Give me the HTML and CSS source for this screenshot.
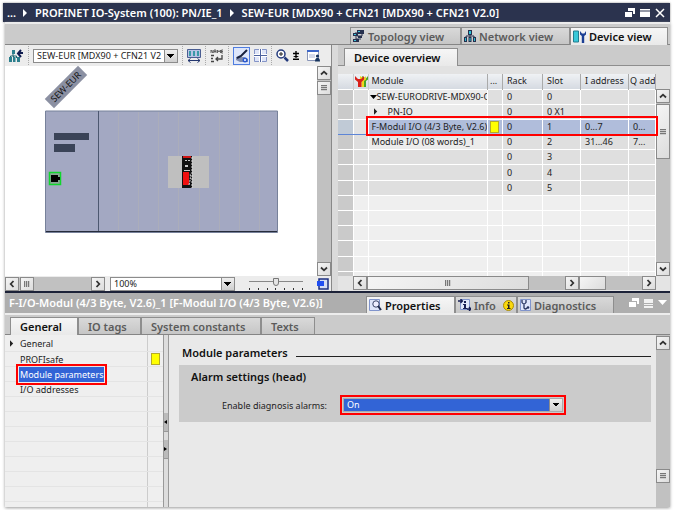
FILE: index.html
```html
<!DOCTYPE html>
<html lang="en">
<head>
<meta charset="utf-8">
<title>Device view</title>
<link rel="stylesheet" href="styles.css">
</head>
<body>
<svg class="defs" aria-hidden="true">
  <symbol id="up" viewBox="0 0 8 8"><path d="M1 5.5 4 2.7 7 5.5" fill="none" stroke="#333" stroke-width="1.8"/></symbol>
  <symbol id="down" viewBox="0 0 8 8"><path d="M1 2.5 4 5.3 7 2.5" fill="none" stroke="#333" stroke-width="1.8"/></symbol>
  <symbol id="left" viewBox="0 0 8 8"><path d="M5.5 1 2.7 4 5.5 7" fill="none" stroke="#333" stroke-width="1.8"/></symbol>
  <symbol id="right" viewBox="0 0 8 8"><path d="M2.5 1 5.3 4 2.5 7" fill="none" stroke="#333" stroke-width="1.8"/></symbol>
  <symbol id="tri" viewBox="0 0 5 8"><path d="M0 0 4 4 0 8z" fill="currentColor"/></symbol>
</svg>
<div class="window">
  <header class="titlebar">
    <nav class="crumbs" aria-label="Path">
      <span>...</span>
      <svg class="tri"><use href="#tri"/></svg>
      <span>PROFINET IO-System (100): PN/IE_1</span>
      <svg class="tri"><use href="#tri"/></svg>
      <span>SEW-EUR [MDX90 + CFN21 [MDX90 + CFN21 V2.0]</span>
    </nav>
    <button class="plain" aria-label="Float"><svg width="10" height="10" viewBox="0 0 10 10"><path d="M3 0h7v6H8V3H3z" fill="#fff"/><path d="M0 4h7v5H0z" fill="#fff"/></svg></button>
    <button class="plain" aria-label="Maximize"><svg width="10" height="10" viewBox="0 0 10 10"><path d="M0 1h10v1.500H0zM0 3.500h10V9H0z" fill="#fff"/></svg></button>
    <button class="plain" aria-label="Close"><svg width="10" height="10" viewBox="0 0 10 10"><path d="M1 1l8 8M9 1l-8 8" stroke="#fff" stroke-width="1.500"/></svg></button>
  </header>

  <div class="body">
    <div class="viewbar">
      <button class="tab view"><svg width="12" height="12" viewBox="0 0 12 12"><path d="M3 2v7h5M9 3v3H4" fill="none" stroke="#2c3550"/><path d="M4 0h7v4H4zM0 3h5v3H0zM5 6h4v2H5zM0 9h6v3H0z" fill="#26304e"/><path d="M5 1h2v1H5zM1 4h2v1H1zM1 10h2v1H1z" fill="#3cc4d8"/></svg>Topology view</button>
      <button class="tab view network"><svg width="12" height="12" viewBox="0 0 12 12"><path d="M6 3v5M2 8V6h8v2" fill="none" stroke="#26304e"/><path d="M4 0h4v5H4zM0 7h3v5H0zM4.500 7h3v5h-3zM9 7h3v5H9z" fill="#26304e"/><path d="M5 1h2v3H5zM1 8h1v3H1zM5.500 8h1v3h-1zM10 8h1v3h-1z" fill="#2bc0d4"/></svg>Network view</button>
      <button class="tab view active"><svg width="13" height="13" viewBox="0 0 13 13"><path d="M.5 1h5v11h-5z" fill="#38c8d8" stroke="#237c90"/><path d="M7 1v3.500L8.800 6v7h2.400V6L13 4.500V1l-1.700 2.500H9z" fill="#1c3f94"/></svg>Device view</button>
    </div>

    <div class="upper">
      <section class="graphic">
        <div class="toolbar">
          <button class="plain" aria-label="Go to network"><svg width="15" height="14" viewBox="0 0 15 14"><path d="M4 3v4M1.500 9V7h6v2M4.500 7v3" fill="none" stroke="#1f6672"/><path d="M3 1h3v4H3zM0 8h3v5H0zM4 8h2.500v5H4zM8 8h3v5H8z" fill="#2b7f8d"/><path d="M14 4H9m3-3L9 4.500 12 8" fill="none" stroke="#101c50" stroke-width="2"/></svg></button>
          <i class="sep"></i>
          <select class="combo device" aria-label="Device"><option>SEW-EUR [MDX90 + CFN21 V2</option></select>
          <i class="sep"></i>
          <button class="plain" aria-label="Show addresses"><svg width="14" height="14" viewBox="0 0 14 14"><path d="M.5.500h13v8H.5z" fill="#b8c4e4" stroke="#4a5d91"/><path d="M2 2h2v5H2zM6 2h2v5H6zM10 2h2v5h-2z" fill="#3a9aa8"/><path d="M1 11.500h12M3.500 9.500l-2.500 2 2.500 2M10.500 9.500l2.500 2-2.500 2" fill="none" stroke="#24366f"/></svg></button>
          <i class="sep"></i>
          <button class="plain" aria-label="Show names"><svg width="14" height="14" viewBox="0 0 14 14"><path d="M1 4V1l2 3V1M4 4V1h2v3M4 2.500h2M7.500 4V1L9 3l1.500-2v3M13 1h-1.500v3H13M11.500 2.500H13" fill="none" stroke="#555" stroke-width=".9"/><path d="M1 6.500h3M1 9.500h2M1 12.500h3M12 6v4H6m2-2L6 10l2 2" fill="none" stroke="#444" stroke-width="1.300"/></svg></button>
          <i class="sep"></i>
          <button class="plain pressed" aria-label="Show labels"><svg width="14" height="14" viewBox="0 0 14 14"><path d="M1 8h8l4 2v3H5L1 11z" fill="#7f8cae"/><path d="M2 9 6 7 12 1" fill="none" stroke="#17203f" stroke-width="2"/><circle cx="10" cy="11" r="2.500" fill="#2b59d0"/><circle cx="10" cy="11" r="1" fill="#fff"/></svg></button>
          <button class="plain" aria-label="Grid"><svg width="13" height="13" viewBox="0 0 13 13"><path d="M.5.500h12v12H.5z" fill="#dfe5f8" stroke="#8595c8"/><path d="M6.500 0v13M0 6.500h13" stroke="#fff" stroke-width="3"/><path d="M6.500 0v13M0 6.500h13" stroke="#4d629f"/></svg></button>
          <i class="sep"></i>
          <button class="plain" aria-label="Zoom"><svg width="13" height="13" viewBox="0 0 13 13"><circle cx="5" cy="5" r="4" fill="#fff" stroke="#233a7d" stroke-width="1.500"/><path d="M5 3v4M3 5h4" stroke="#222"/><path d="m8.500 8.500 3.500 3.500" stroke="#233a7d" stroke-width="2.500"/></svg></button>
          <svg width="6" height="9" viewBox="0 0 6 9"><path d="M0 2.500h6M3 0v6" stroke="#000" stroke-width="1.400"/><path d="M0 5h6L3 7zM0 7.500h6V9H0z"/></svg>
          <button class="plain last" aria-label="Overview"><svg width="13" height="13" viewBox="0 0 13 13"><path d="M.5 1.500h11v10H.5z" fill="#fff" stroke="#8895b8"/><path d="M0 1h12v2H0z" fill="#3d66c8"/><path d="M2 8h6M2 6h6" stroke="#a8b4d4"/><circle cx="10.500" cy="7" r="1.600" fill="#17345e"/><path d="M8 12.500c0-5 5-5 5 0z" fill="#17345e"/></svg></button>
        </div>
        <div class="stage">
          <div class="canvas">
            <svg width="311" height="176" viewBox="0 0 311 176">
              <g transform="translate(61 21) rotate(-45)">
                <path d="M-23.500-6.500h47v13h-47z" fill="#8b90a2"/>
                <text class="rack-label" text-anchor="middle" y="3">SEW-EUR</text>
              </g>
              <path d="M40.500 45h232v121.500h-232z" fill="#a3a8c2" stroke="#77819a"/>
              <path d="M113.500 46v119M133.500 46v119M153.500 46v119M173.500 46v119M194.500 46v119M214.500 46v119M234.500 46v119M254.500 46v119" stroke="#abadba"/>
              <path d="M93.500 45v121" stroke="#4d5870"/>
              <path d="M41 165.500h231" stroke="#262c3b"/>
              <path d="M49 67h35v7H49zM49 78h21v8H49z" fill="#3a4357"/>
              <path d="M44.500 106.500h11v12h-11z" fill="#8ba598" stroke="#10d62c" stroke-width="1.500"/>
              <path d="M46 109h7v2h2v3h-2v2h-7z"/>
              <path d="M163 90h41v32h-41z" fill="#bfbfbf"/>
              <path d="M177 90h10v32h-10z" fill="#111"/>
              <path d="M178 90h8v2h-8z" fill="#d01515"/>
              <path d="M180 94h2v1h-2zM183 94h2v1h-2zM180 99h3v2h-3zM179 104h6v1h-6z" fill="#c9c9c9"/>
              <path d="M178 106h6v13h-6z" fill="#f01010"/>
              <path d="M187 91v31M184 119c1-5 2-7 1-12" fill="none" stroke="#ddd" stroke-dasharray="2 1"/>
            </svg>
          </div>
          <div class="vscroll">
            <button class="sb" aria-label="Scroll up"><svg><use href="#up"/></svg></button>
            <div class="thumb small"><i class="grip"></i></div>
            <div class="grow"></div>
            <button class="sb" aria-label="Scroll down"><svg><use href="#down"/></svg></button>
          </div>
        </div>
        <div class="footbar">
          <div class="hscroll canvas-h">
            <button class="sb" aria-label="Scroll left"><svg><use href="#left"/></svg></button>
            <div class="thumb small"><i class="grip v"></i></div>
            <div class="grow"></div>
            <button class="sb" aria-label="Scroll right"><svg><use href="#right"/></svg></button>
          </div>
          <select class="combo zoom" aria-label="Zoom factor"><option>100%</option></select>
          <div class="slider"><input type="range" min="0" max="6" value="3" aria-label="Zoom"><div class="ticks"><i></i><i></i><i></i><i></i><i></i><i></i><i></i></div></div>
          <button class="plain" aria-label="Navigator"><svg width="12" height="12" viewBox="0 0 12 12"><path d="M2 1h9v10H2z" fill="#d4dcf5" stroke="#1c2f80" stroke-width="1.500"/><path d="M0 3h7v5H0z" fill="#1f4df2"/></svg></button>
        </div>
      </section>

      <section class="overview">
        <div class="strip"><button class="tab sub active">Device overview</button></div>
        <div class="grid-area">
          <div class="clip">
            <table>
              <colgroup><col class="c0"><col class="c1"><col><col class="c1"><col class="c4"><col class="c5"><col class="c6"><col class="c7"></colgroup>
              <thead><tr><th></th><th><svg width="13" height="13" viewBox="0 0 13 13"><path d="M7 1v3.500L8.500 6v6h2.500V6L13 4.500V1l-2 2.500z" fill="#4aa428"/><path d="M5 1v3.500L6.500 6v6h2.500V6L11 4.500V1L9 3.500z" fill="#efd41c"/><path d="M0 1v3.500L3 7v5h3.500V7L9 4.500V1L6 4H3z" fill="#d8201a"/></svg></th><th>Module</th><th>...</th><th>Rack</th><th>Slot</th><th>I address</th><th>Q add</th></tr></thead>
              <tbody>
                <tr><td></td><td></td><td class="name root"><svg width="7" height="5" viewBox="0 0 7 5"><path d="M0 0h7L3.500 4z"/></svg>SEW-EURODRIVE-MDX90-C</td><td></td><td>0</td><td>0</td><td></td><td></td></tr>
                <tr><td></td><td></td><td class="name child"><svg width="4" height="7"><use href="#tri"/></svg>PN-IO</td><td></td><td>0</td><td>0 X1</td><td></td><td></td></tr>
                <tr class="selected"><td></td><td></td><td class="name">F-Modul I/O (4/3 Byte, V2.6)_</td><td><i class="flag"></i></td><td>0</td><td>1</td><td>0...7</td><td>0...</td></tr>
                <tr><td></td><td></td><td class="name">Module I/O (08 words)_1</td><td></td><td>0</td><td>2</td><td>31...46</td><td>7...</td></tr>
                <tr><td></td><td></td><td></td><td></td><td>0</td><td>3</td><td></td><td></td></tr>
                <tr><td></td><td></td><td></td><td></td><td>0</td><td>4</td><td></td><td></td></tr>
                <tr><td></td><td></td><td></td><td></td><td>0</td><td>5</td><td></td><td></td></tr>
                <tr class="empty"><td></td><td></td><td></td><td></td><td></td><td></td><td></td><td></td></tr>
                <tr class="empty"><td></td><td></td><td></td><td></td><td></td><td></td><td></td><td></td></tr>
                <tr class="empty"><td></td><td></td><td></td><td></td><td></td><td></td><td></td><td></td></tr>
                <tr class="empty"><td></td><td></td><td></td><td></td><td></td><td></td><td></td><td></td></tr>
                <tr class="empty"><td></td><td></td><td></td><td></td><td></td><td></td><td></td><td></td></tr>
                <tr class="empty"><td></td><td></td><td></td><td></td><td></td><td></td><td></td><td></td></tr>
              </tbody>
            </table>
          </div>
          <div class="vscroll under-head">
            <button class="sb" aria-label="Scroll up"><svg><use href="#up"/></svg></button>
            <div class="thumb tall"><i class="grip"></i></div>
            <div class="grow"></div>
            <button class="sb" aria-label="Scroll down"><svg><use href="#down"/></svg></button>
          </div>
          <div class="callout"></div>
        </div>
        <div class="hscrolls">
          <div class="hscroll wide">
            <button class="sb" aria-label="Scroll left"><svg><use href="#left"/></svg></button>
            <div class="thumb long"><i class="grip v"></i></div>
            <div class="grow"></div>
            <button class="sb" aria-label="Scroll right"><svg><use href="#right"/></svg></button>
          </div>
          <div class="hscroll narrow">
            <div class="thumb mid"></div>
            <div class="grow"></div>
            <button class="sb" aria-label="Scroll right"><svg><use href="#right"/></svg></button>
          </div>
        </div>
      </section>
    </div>

    <div class="inspector-title">
      <h2>F-I/O-Modul (4/3 Byte, V2.6)_1 [F-Modul I/O (4/3 Byte, V2.6)]</h2>
      <div class="itabs">
        <button class="tab insp properties active"><svg width="13" height="12" viewBox="0 0 13 12"><path d="M.5.500h10v11H.5z" fill="#dfe6fa" stroke="#8094cc"/><circle cx="7" cy="5" r="3.200" fill="#eef" stroke="#3a4568"/><path d="m9 7 3 4" stroke="#222c4c" stroke-width="2"/></svg>Properties</button>
        <button class="tab insp info"><svg width="13" height="12" viewBox="0 0 13 12"><path d="M2.500.500h9v10h-9z" fill="#dfe6fa" stroke="#8094cc"/><path d="M0 2h4M2.500 0l2 2-2 2M9 10h4M11 8l2 2-2 2" fill="none" stroke="#171f55" stroke-width="1.300"/><path d="M6 2h2v2H6zM5 5h3v4h1v1H5V9h1V6H5z" fill="#171f55"/></svg>Info<svg class="badge" width="11" height="11" viewBox="0 0 11 11"><circle cx="5.500" cy="5.500" r="5" fill="#fbd90c" stroke="#a98c08"/><path d="M5 2h1.500v1.500H5zM4 4.500h2.500v3.500h1v1H4V8h1V5.500H4z" fill="#222"/></svg></button>
        <button class="tab insp diag"><svg width="11" height="12" viewBox="0 0 11 12"><path d="M.5.500h10v11H.5z" fill="#dfe6fa" stroke="#8094cc"/><path d="M2 1v2.500q2 3 4 0V1M4 5v4q1 2 3 0" fill="none" stroke="#26345f" stroke-width="1.300"/><circle cx="8" cy="8.500" r="1.300" fill="#26345f"/></svg>Diagnostics</button>
      </div>
      <div class="ictl">
        <button class="plain" aria-label="Float"><svg width="10" height="10" viewBox="0 0 10 10"><path d="M3 0h7v6H8V3H3z" fill="#fff"/><path d="M0 4h7v5H0z" fill="#fff"/></svg></button>
        <button class="plain" aria-label="Split"><svg width="9" height="9" viewBox="0 0 9 9"><path d="M0 0h9v4H0zM0 5h9v1H0zM0 7h9v2H0z" fill="#f2f2f2"/></svg></button>
        <button class="plain" aria-label="Collapse"><svg width="9" height="6" viewBox="0 0 9 6"><path d="M0 0h9L4.500 5z" fill="#fff"/></svg></button>
      </div>
    </div>
    <div class="pagebar">
      <button class="tab page p1 active">General</button>
      <button class="tab page p2">IO tags</button>
      <button class="tab page p3">System constants</button>
      <button class="tab page p4">Texts</button>
    </div>
    <div class="lower">
      <nav class="tree" aria-label="Sections">
        <a href="#general"><svg width="4" height="7"><use href="#tri"/></svg><span>General</span></a>
        <a href="#profisafe"><span>PROFIsafe</span><i class="flag"></i></a>
        <a href="#module" class="current"><span>Module parameters</span></a>
        <a href="#io"><span>I/O addresses</span></a>
        <div class="blank"></div>
      </nav>
      <div class="splitter">
        <button aria-label="Collapse left"><svg width="3" height="4" viewBox="0 0 3 4"><path d="M3 0v4L0 2z"/></svg></button>
        <button aria-label="Expand right"><svg width="3" height="4" viewBox="0 0 3 4"><path d="M0 0v4l3-2z"/></svg></button>
      </div>
      <main class="content">
        <div class="heading"><h3>Module parameters</h3><i></i></div>
        <section class="card">
          <h4>Alarm settings (head)</h4>
          <div class="field">
            <label for="diag">Enable diagnosis alarms:</label>
            <div class="ring"><select id="diag" class="combo picked"><option>On</option></select></div>
          </div>
        </section>
      </main>
      <div class="vscroll lower-v">
        <button class="sb" aria-label="Scroll up"><svg><use href="#up"/></svg></button>
        <div class="grow"></div>
        <div class="thumb small"><i class="grip"></i></div>
      </div>
    </div>
  </div>
</div>
</body>
</html>
```
FILE: styles.css
```css
* { box-sizing: border-box; }
body {
  margin: 0;
  padding: 3px 5px 3px 3px;
  background: #fff;
  color: #222;
  font: 9px/15px "Noto Sans", "Open Sans", sans-serif;
}
button, select, input { font: inherit; color: inherit; margin: 0; }
svg { flex: none; }
.defs { position: absolute; width: 0; height: 0; }
.window { display: flex; flex-direction: column; height: calc(100vh - 6px); min-height: 480px; }
.plain { display: flex; align-items: center; justify-content: center; padding: 0; border: 0; background: none; }

.titlebar {
  flex: none;
  display: flex;
  align-items: center;
  gap: 5px;
  height: 19px;
  padding: 0 5px 0 4px;
  background: #2b334e;
  color: #fff;
  box-shadow: 0 0 2px #888;
}
.crumbs { flex: 1; display: flex; align-items: center; gap: 7px; font-size: 11px; font-weight: 600; white-space: nowrap; }
.tri { width: 5px; height: 8px; }

.body {
  flex: 1;
  min-height: 0;
  display: flex;
  flex-direction: column;
  margin-left: 2px;
  background: #e9e9e9;
  box-shadow: 0 1px 3px #999;
}
.viewbar {
  flex: none;
  display: flex;
  justify-content: flex-end;
  align-items: flex-end;
  height: 23px;
  padding-right: 2px;
  border-top: 2px solid #ececec;
  border-bottom: 1px solid #858585;
  background: #cbcbcb;
}
.tab {
  display: flex;
  align-items: center;
  gap: 3px;
  padding: 0 3px;
  border: 1px solid #8e8e8e;
  border-bottom: 0;
  background: linear-gradient(#d9d9d9, #c6c6c6);
  color: #5b5b5b;
  font-size: 11px;
  font-weight: 600;
  white-space: nowrap;
}
.tab.active { background: linear-gradient(#f6f6f6, #e9e9e9); color: #111; }
.view { width: 111px; height: 17px; padding: 0 2px; }
.network { width: 109px; }
.view.active { width: 98px; margin-bottom: -1px; height: 18px; }

.upper { flex: 247 1 0; min-height: 0; display: flex; border-bottom: 2px solid #1c2238; }
.graphic { flex: 1 1 327px; min-width: 0; display: flex; flex-direction: column; border-right: 1px solid #888; }
.toolbar { flex: none; display: flex; align-items: center; gap: 4px; height: 21px; padding: 0 11px 0 4px; background: #ececec; }
.sep { width: 1px; height: 19px; border-left: 1px dotted #aaa; }
.pressed { width: 17px; height: 18px; border: 1px solid #4f7de0; background: #dde6fb; }
.last { margin-left: 4px; }
.combo {
  appearance: none;
  min-width: 0;
  padding: 0 12px 0 3px;
  border: 1px solid #8c8c8c;
  border-radius: 0;
  outline: 0;
  background:
    linear-gradient(to bottom right, #000 50%, transparent 50%) right 2px center / 4px 4px no-repeat,
    linear-gradient(to bottom left, #000 50%, transparent 50%) right 6px center / 4px 4px no-repeat,
    linear-gradient(#8c8c8c, #8c8c8c) right 12px top / 1px 100% no-repeat,
    linear-gradient(#eee, #cfcfcf) right / 12px 100% no-repeat,
    #fff;
}
.device { flex: 1; height: 14px; line-height: 12px; }

.stage { flex: 1; min-height: 0; display: flex; }
.canvas { flex: 1; min-width: 0; overflow: hidden; background: #fff; }
.rack-label { font-size: 9px; fill: #111; }

.vscroll { flex: none; display: flex; flex-direction: column; width: 14px; background: #c1c1c1; }
.hscroll { display: flex; height: 14px; background: #c1c1c1; }
.grow { flex: 1; }
.sb, .thumb {
  flex: none;
  display: flex;
  align-items: center;
  justify-content: center;
  width: 14px;
  height: 14px;
  padding: 0;
  border: 1px solid #8a8a8a;
  background: linear-gradient(135deg, #f5f5f5, #dcdcdc);
}
.sb svg { width: 8px; height: 8px; }
.vscroll .small { margin-top: 1px; }
.tall { height: 55px; margin-top: 1px; }
.grip { width: 6px; height: 6px; background: repeating-linear-gradient(#777 0 1px, #ccc 1px 2px); }
.grip.v { background: repeating-linear-gradient(90deg, #777 0 1px, #ccc 1px 2px); }

.footbar { flex: none; display: flex; align-items: center; height: 15px; padding-right: 2px; background: #ececec; }
.canvas-h { flex: 1 1 100px; }
.canvas-h .small { margin-left: 1px; }
.zoom { flex: 1 1 125px; height: 14px; margin-left: 5px; line-height: 12px; }
.slider { flex: 1 1 82px; min-width: 0; padding: 0 14px; }
.slider input { display: block; appearance: none; width: 100%; height: 8px; background: linear-gradient(#888, #888) center / 100% 1px no-repeat; }
.slider input::-webkit-slider-thumb { appearance: none; width: 6px; height: 8px; border: 1px solid #777; border-radius: 0 0 3px 3px; background: #e4e4e4; }
.ticks { display: flex; justify-content: space-between; margin-top: 2px; }
.ticks i { width: 1px; height: 2px; background: #333; }

.overview { flex: 1 1 338px; min-width: 0; display: flex; flex-direction: column; border-left: 6px solid #dadada; }
.strip { flex: none; display: flex; height: 21px; padding: 3px 6px 0; border-bottom: 1px solid #8e8e8e; background: #cbcbcb; }
.sub { width: 114px; height: 18px; padding: 0 9px; }
.grid-area { position: relative; flex: 1; min-height: 0; display: flex; padding-top: 8px; background: #e2e2e2; }
.clip { flex: 1; min-width: 0; overflow: hidden; }
table { width: 100%; height: 213px; table-layout: fixed; border-collapse: collapse; }
.c0, .c1 { width: 15px; }
.c4 { width: 40px; }
.c5 { width: 38px; }
.c6 { width: 48px; }
.c7 { width: 27px; }
th, td { height: 15px; padding: 0 0 0 4px; overflow: hidden; line-height: 14px; text-align: left; font-weight: 400; white-space: nowrap; }
th { border-right: 1px solid #aaa; background: linear-gradient(#eff1f4, #d5dae1); }
th:nth-child(2), th:nth-child(1) { padding: 0 1px; border-right-color: #ccc; }
th:nth-child(3), .name { padding-left: 3px; }
th:nth-child(8) { padding-left: 1px; }
th:nth-child(4), td:nth-child(4) { padding-left: 2px; }
th svg { display: block; }
td { border: 1px solid #fff; border-width: 1px 1px 1px 0; background: #dfdfdf; }
td:first-child { background: #cacaca; }
.name { background: #ececec; }
.root { padding-left: 1px; }
.child svg { margin: 0 10px 0 2px; }
.empty td:not(:first-child) { background: #efefef; }
.selected td { border-color: #5d85d6 #fff; background: #b0bddb; }
.selected td:first-child { background: #c0cad6; }
.selected td:nth-child(2) { background: #e3e3e3; }
.flag { display: block; width: 9px; height: 12px; border: 1px solid #b5aa28; background: #ff0; }
.under-head { margin-top: 15px; }
.callout { position: absolute; top: 50px; left: 28px; right: 12px; height: 20px; border: 2px solid #f00; }
.hscrolls { flex: none; display: flex; height: 15px; padding: 0 14px 1px 15px; background: #e4e4e4; }
.wide { flex: 226 1 0; }
.narrow { flex: 77 1 0; }
.long { flex: 162 1 0; }
.wide .grow { flex: 36 1 0; }
.mid { width: 27px; }

.inspector-title { flex: none; display: flex; align-items: flex-end; height: 22px; padding: 0 3px 0 4px; border-bottom: 2px solid #ededed; background: #aeaeae; }
h2, h3, h4 { margin: 0; font-size: 11px; font-weight: 600; color: #111; white-space: nowrap; }
h2 { flex: 356 1 0; min-width: 0; height: 18px; color: #fff; }
.itabs { display: flex; }
.insp { height: 17px; padding: 0 2px; }
.properties { width: 89px; }
.info { width: 62px; }
.diag { width: 97px; }
.badge { margin-left: auto; }
.ictl { flex: 53 1 0; display: flex; justify-content: flex-end; align-items: center; gap: 5px; height: 20px; }

.pagebar { flex: none; display: flex; align-items: flex-end; height: 20px; padding-left: 5px; border-bottom: 1px solid #858585; background: #cbcbcb; }
.page { height: 17px; padding: 0 9px; }
.page.active { height: 18px; margin-bottom: -1px; }
.p1 { width: 68px; }
.p2 { width: 63px; }
.p3 { width: 120px; }
.p4 { width: 54px; }

.lower { flex: 172 1 0; min-height: 0; display: flex; }
.tree { flex: none; width: 158px; display: flex; flex-direction: column; background: linear-gradient(#ccc, #ccc) 142px 0 / 1px 100% no-repeat, #efefef; }
.tree a { flex: none; display: flex; align-items: center; height: 15px; padding: 0 3px 0 15px; border-bottom: 1px solid #e4e4e4; color: inherit; text-decoration: none; }
.tree a:first-child { height: 17px; padding-left: 5px; }
.tree a:first-child svg { margin-right: 6px; }
.tree .flag { margin-left: auto; }
.current span { margin-left: -1px; padding: 0 1px; outline: 2px solid #f00; outline-offset: 1px; background: #3264d6; color: #fff; }
.blank { flex: 1; background: repeating-linear-gradient(transparent 0 14px, #e4e4e4 14px 15px); }
.splitter { flex: none; display: flex; flex-direction: column; justify-content: center; gap: 8px; width: 6px; padding-top: 30px; border: 1px solid #999; border-width: 0 1px; background: #ddd; }
.splitter button { display: flex; align-items: center; height: 19px; padding: 0; border: 1px solid #999; border-width: 0 0 1px; background: #bbb; }
.content { flex: 1; min-width: 0; padding: 10px 5px 0 10px; }
.heading { display: flex; align-items: center; gap: 8px; padding-left: 3px; height: 15px; }
.heading i { flex: 1; height: 1px; margin-top: 8px; background: #222; }
.card { margin-top: 5px; padding: 4px 0 7px 12px; background: #cbcbcb; }
.field { display: flex; align-items: center; margin-top: 11px; }
.field label { flex: none; width: 149px; padding-left: 31px; white-space: nowrap; }
.ring { flex: 0 1 226px; display: flex; padding: 1px; border: 2px solid #f00; }
.picked { flex: 1; height: 14px; line-height: 12px; border-color: #aaa; background-color: #3264d6; color: #fff; }
.picked option { color: #222; }
.lower-v { padding-top: 1px; }
.lower-v .small { margin-bottom: 24px; }
```
